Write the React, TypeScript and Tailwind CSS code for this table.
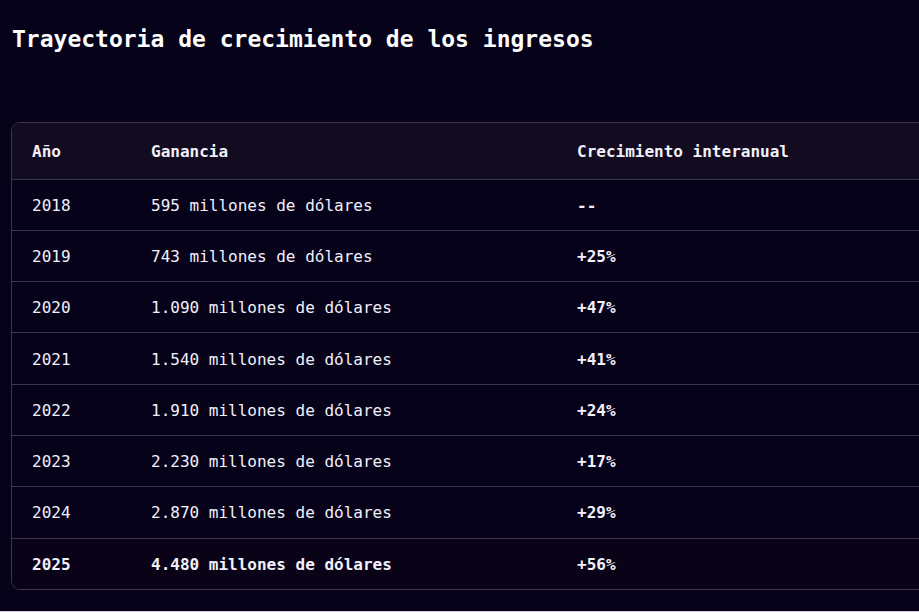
import React from "react";

const rows = [
  ["2018", "595 millones de dólares", "--"],
  ["2019", "743 millones de dólares", "+25%"],
  ["2020", "1.090 millones de dólares", "+47%"],
  ["2021", "1.540 millones de dólares", "+41%"],
  ["2022", "1.910 millones de dólares", "+24%"],
  ["2023", "2.230 millones de dólares", "+17%"],
  ["2024", "2.870 millones de dólares", "+29%"],
  ["2025", "4.480 millones de dólares", "+56%"],
];

export default function App() {
  return (
    <div className="h-[612px] w-[919px] overflow-hidden bg-[#06021a] border-b border-[#cfc8dc] text-[#f2f0fa] font-['DejaVu_Sans_Mono',monospace]">
      <div className="pl-[11px] pt-[24px]">
        <h1 className="pl-px text-[23px] leading-[30px] font-bold text-white">
          Trayectoria de crecimiento de los ingresos
        </h1>
        <div className="mt-[68px] w-[1000px] rounded-[9px] border border-[#3b3552] overflow-hidden">
          <table className="w-full table-fixed border-collapse text-[16px]">
            <colgroup>
              <col className="w-[139px]" />
              <col className="w-[426px]" />
              <col />
            </colgroup>
            <thead>
              <tr className="bg-[#130b1f] h-[56px]">
                <th className="pl-5 pt-[2px] text-left font-bold">Año</th>
                <th className="pt-[2px] text-left font-bold">Ganancia</th>
                <th className="pt-[2px] text-left font-bold">Crecimiento interanual</th>
              </tr>
            </thead>
            <tbody>
              {rows.map((r, i) => {
                const last = i === rows.length - 1;
                return (
                  <tr key={r[0]} className={`h-[51.3px] border-t border-[#3b3552] ${last ? "font-bold bg-[#0a0318]" : ""}`}>
                    <td className="pl-5 pt-[2px]">{r[0]}</td>
                    <td className="pt-[2px]">{r[1]}</td>
                    <td className="pt-[2px] font-bold">{r[2]}</td>
                  </tr>
                );
              })}
            </tbody>
          </table>
        </div>
      </div>
    </div>
  );
}
